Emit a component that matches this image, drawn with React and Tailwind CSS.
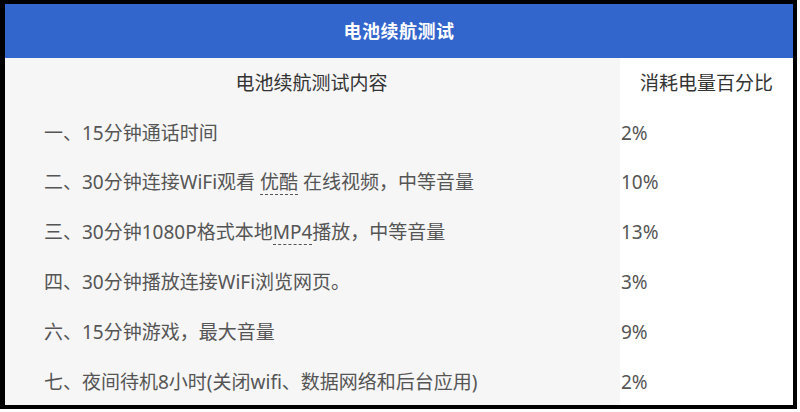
const rows = [
  { text: ['一、15分钟通话时间'], pct: '2%' },
  { text: ['二、30分钟连接WiFi观看 ', { u: '优酷' }, ' 在线视频，中等音量'], pct: '10%' },
  { text: ['三、30分钟1080P格式本地', { u: 'MP4' }, '播放，中等音量'], pct: '13%' },
  { text: ['四、30分钟播放连接WiFi浏览网页。'], pct: '3%' },
  { text: ['六、15分钟游戏，最大音量'], pct: '9%' },
  { text: ['七、夜间待机8小时(关闭wifi、数据网络和后台应用)'], pct: '2%' },
];

const App = () => {
  return (
    <div
      className="w-[800px] h-[412px] bg-white overflow-hidden"
      style={{ fontFamily: '"Noto Sans", "Noto Sans CJK SC", sans-serif' }}
    >
      <div className="w-[797px] h-[409px] border-4 border-l-[5px] border-black flex flex-col">
        {/* Title bar */}
        <div className="h-[54px] shrink-0 bg-[#3366cc] flex items-center justify-center">
          <span className="text-white text-[18px] font-bold tracking-[0.5px]">电池续航测试</span>
        </div>

        {/* Table */}
        <div className="flex-1 grid grid-cols-[615px_1fr]">
          <div className="bg-[#f6f6f6] flex flex-col">
            <div className="flex-1 flex items-center justify-center pt-[2px] text-[19px] text-[#333] pr-[2px]">
              电池续航测试内容
            </div>
            {rows.map((r, i) => (
              <div key={i} className="flex-1 flex items-center pt-[4px] pl-[39px] text-[19px] text-[#555]">
                {r.text.map((t, j) =>
                  typeof t === 'string' ? (
                    <span key={j} className="whitespace-pre">{t}</span>
                  ) : (
                    <span key={j} className="border-b border-dashed border-[#555] leading-[23px]">{t.u}</span>
                  )
                )}
              </div>
            ))}
          </div>
          <div className="bg-white flex flex-col">
            <div className="flex-1 flex items-center pt-[2px] pl-[20px] text-[19px] text-[#333]">
              消耗电量百分比
            </div>
            {rows.map((r, i) => (
              <div key={i} className="flex-1 flex items-center pt-[4px] pl-[1px] text-[19px] text-[#555]">
                {r.pct}
              </div>
            ))}
          </div>
        </div>
      </div>
    </div>
  );
};

export default App;
